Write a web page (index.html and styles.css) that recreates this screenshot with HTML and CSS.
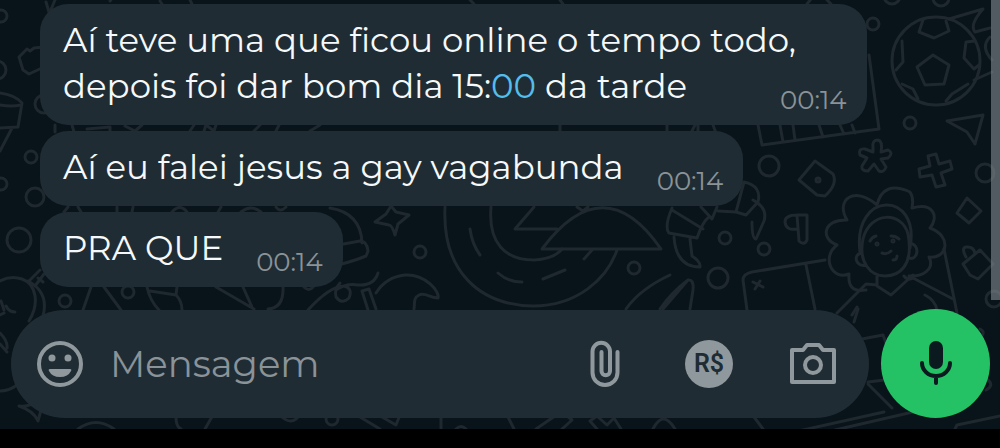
FILE: index.html
```html
<!DOCTYPE html>
<html lang="pt-BR">
<head>
    <meta charset="UTF-8">
    <meta name="viewport" content="width=device-width, initial-scale=1.0">
    <title>Conversa</title>
    <link rel="stylesheet" href="styles.css">
</head>
<body>
    <main class="chat">
        <!-- wallpaper -->
        <svg class="wallpaper" viewBox="0 0 1000 448" preserveAspectRatio="xMinYMin slice" aria-hidden="true">
            <!-- left edge -->
            <circle cx="1" cy="16" r="6"/>
            <circle cx="-3" cy="70" r="9"/>
            <circle cx="44" cy="104" r="9"/>
            <circle cx="31" cy="157" r="6"/>
            <circle cx="1" cy="184" r="6"/>
            <circle cx="35" cy="197" r="9"/>
            <circle cx="19" cy="240" r="12"/>
            <path d="M46 2l3 10M55 0l-5 12M44 47l-10 1-4 3-3-2-8 8 4 13 6 4 13-6"/>
            <path d="M0 93q15 2 22 10l-4 24-18 1M0 105q12 2 21 0M12 128L0 151"/>
            <path d="M0 281q11-6 22-2c14 5 18 24 7 42M28 281c15 8 19 20 15 35M30 280l10-10M35 286l9-12M38 278l5 4M1 301l3 9M6 306q3 6 9 6M0 315l4-2M0 333q8 8 7 15M0 344l7 8M0 391q9 0 17-6"/>
            <path d="M19 406q12 2 18-8l4 12-3 11q-4-10-19-15zM78 429q18-13 36 0"/>
            <!-- gaps between the bubbles -->
            <path d="M55 125v7M72 125l2 7M87 129l23-2v5M125 126l10 5 7-6M190 131l4-6M204 131l2-6 8 6 2-6M254 131l6-6M276 131l3-6M310 131l10-6M560 131v-6M667 125v6M692 131l3-6M698 131v-6M713 125l3 8"/>
            <path d="M64 212l4-5M78 207l3 5M117 212v-5M132 212l1-5M172 212q8-9 15 0M218 212l3-5M241 212q10-8 20 0M276 207q4 6 10 0"/>
            <path d="M110 1l3-4M160 1l2 3M190 0l2 4M470 0l4 4M560 0l3 4M807 4l4-5M827 0l4 4"/>
            <!-- plant and loops under the third bubble -->
            <circle cx="65" cy="301" r="6"/>
            <circle cx="128" cy="292" r="6"/>
            <path d="M91 287l-8 23M104 287l17 23M147 287q3 14 12 23M150 291l26 4 1-8M176 295q6 6 6 15M216 287l38 22M243 287l9 20M283 287q1 21-15 22M304 287q5 5 9 0"/>
            <path d="M308 310q22-24 36-24 9 2 5 12-7 7-13-1-2-8 4-14M336 290q10-7 22-5 16 1 20-12"/>
            <!-- hat, sparkle, hammer -->
            <circle cx="420" cy="252" r="6"/>
            <path d="M330 208q31 5 32 35M338 245l22-4q7 0 8 10l-2 5q-12 5-28 9"/>
            <path d="M391 206l5 6 13 3-11 9-3 11q-3-10-6-10l-14-3 11-8z"/>
            <path d="M376 309l-7-20-7 2 6 19M376 293q10-16 29-18c21-1 35 17 33 23-8 0-13-6-19-3-6 3-4 8-5 14"/>
            <!-- ring and melon slices -->
            <path d="M445 207c-3 64 34 98 88 99 44 0 74-27 84-56M491 207c-3 36 14 53 43 53q20-1 28-11M470 229q2 15 10 26M498 273q10 9 24 9M543 279l22-9M584 259l8-9"/>
            <path d="M557 229h-42l19-22M542 249h119c-38-55-78-55-119 0zM577 207l6 4 5-4"/>
            <circle cx="634" cy="268" r="6"/>
            <path d="M626 309q14-20 44-34M660 309q11-16 28-29 6-1 5 10l-3 19M663 309l25-29"/>
            <!-- crab -->
            <path d="M672 208q-8 19-3 25l28 5q6-17 12-21M672 210l31 19M701 207l11 12 5-12M718 211l18 1 8-30q18 4 14 20l-12 13-10-3M753 200q15 8 11 21l-8 18q-4 0-4-17M674 237q2 30 26 30 1-5-8-11l-2-17"/>
            <circle cx="725" cy="238" r="6"/>
            <circle cx="764" cy="249" r="6"/>
            <circle cx="718" cy="278" r="10"/>
            <circle cx="769" cy="166" r="10"/>
            <circle cx="873" cy="24" r="6"/>
            <circle cx="910" cy="123" r="6"/>
            <circle cx="985" cy="173" r="9"/>
            <circle cx="941" cy="-2" r="8"/>
            <circle cx="892" cy="-4" r="8"/>
            <circle cx="994" cy="299" r="8"/>
            <!-- football -->
            <circle cx="936" cy="61" r="44"/>
            <path d="M933 55l16 10-5 19-19 1-8-18zM923 20l-4 12 15 6 15-7-3-10M902 41l1 21-7 8M975 41l-9 1-2 16 10 11 5-4M902 84l11 5 5 10M946 101l6-7 16-10M949 19l34-10q-14 16-8 23l15-4M990 37q-10 10 2 23M974 80l18-8"/>
            <!-- piano -->
            <path d="M758 125l4 20 117-16-10-74M780 125l3 17M793 125l2 15M819 125l4 12M840 125l4 9M852 125l3 8"/>
            <!-- small shapes -->
            <path d="M947 121l36-6-8 29-8-12zM873 147q-1-7 5-7 5 1 3 12l7-2q6 3 0 8l-7 1 5 8q-2 6-7 4l-5-7-6 7q-7 0-6-5l5-8-7-3q-2-7 5-6l8 3zM928 156l8-2 3 10 11-3 2 8-11 4 4 12-9 2-4-12-12 2-1-8 11-3zM815 161l18 13q5 10-8 22l-8-1-18-15zM967 198l14 13-12 12-12-10z"/>
            <path d="M797 215h10v25q-3 6-8 1zM797 215q-12 0-12 7 1 9 12 7M966 257q-5-9 0-10 8-1 9 7M963 264l17-14 13 14-15 15-8-4z"/>
            <circle cx="818" cy="180" r="2"/>
            <!-- girl with curly hair -->
            <path d="M847 220c-12-20 7-35 30-15q6-25 33-13 4 6 2 16c22-6 27 9 18 20 22 8 18 31-1 29 6 12-6 20-20 19M847 220c-24-1-27 19-10 25-16 12-5 36 12 29-1 13 4 18 17 16"/>
            <path d="M860 252c-8-62 61-62 50-4M863 239c-5 24 8 37 22 37s29-10 23-42c-6-23-38-23-45 5zM862 253c-10 1-6 15 4 12M909 243c12 1 9 18 0 15M870 241q2-4 6-5M891 236q5 0 8 3M882 253q5 2 9-2M893 260q4 0 4-4M877 276v10l14 9 22-20M877 285l-11-1-29 29M904 276q4 5 9 2l40 21M925 295q10 5 12 15M857 307l-5 8"/>
            <circle cx="877" cy="244" r="1"/>
            <circle cx="893" cy="241" r="1"/>
            <path d="M747 310l-4-30q0-6 9-8l73-12M806 265l9 44M944 249l13 64M753 282l10 5M755 289l5-8"/>
            <!-- notebook behind the microphone -->
            <path d="M854 322l4-13M862 339l21-4 3 8M868 382l25-3M868 384l24 24M794 432l90-20M835 430l78-18M955 429l2-4 43-9M980 329q6 3 1 8M987 379q8 6-1 11"/>
            <!-- strip under the composer -->
            <path d="M176 417q0 10 5 12M205 429l8-14M282 417q9 8 16 0M360 417l20 12M382 417l14 8 4-10M441 429V417M508 417l6 12M536 429l19-13M562 429l10-9-6-5M590 421l7-5 10 9 7-7 7 11M590 421l7 8M754 417l9 12M653 429q10-20 22 0M456 429q5-5 10 0"/>
            <circle cx="332" cy="419" r="6"/>
        </svg>

        <ul class="messages">
            <li class="bubble">
                Aí teve uma que ficou online o tempo todo, depois foi dar bom dia 15:<a href="#">00</a> da tarde
                <time>00:14</time>
            </li>
            <li class="bubble">
                Aí eu falei jesus a gay vagabunda
                <time>00:14</time>
            </li>
            <li class="bubble">
                PRA QUE
                <time>00:14</time>
            </li>
        </ul>

        <form class="composer">
            <div class="field">
                <button type="button" class="icon" aria-label="Emoji">
                    <svg viewBox="0 0 48 48">
                        <circle cx="24" cy="24" r="21" fill="none" stroke="currentColor" stroke-width="4"/>
                        <circle cx="16" cy="18" r="3.500"/>
                        <circle cx="32" cy="18" r="3.500"/>
                        <path d="M14 29h20q2 0 1 2-3 6-11 6t-11-6q-1-2 1-2z"/>
                    </svg>
                </button>
                <input type="text" placeholder="Mensagem" aria-label="Mensagem">
                <button type="button" class="icon outline" aria-label="Anexar">
                    <svg viewBox="0 0 48 48">
                        <path d="M36.500 12v20.500a12.500 12.500 0 0 1-25 0V11.500a8.750 8.750 0 0 1 17.500 0V31a4.250 4.250 0 0 1-8.500 0V12"/>
                    </svg>
                </button>
                <button type="button" class="icon coin" aria-label="Pagamento">R$</button>
                <button type="button" class="icon outline" aria-label="Câmera">
                    <svg viewBox="0 0 48 48">
                        <path d="M3 10h11l4-5h12l4 5h11v32H3z"/>
                        <circle cx="24" cy="25" r="8"/>
                    </svg>
                </button>
            </div>
            <button type="button" class="mic" aria-label="Gravar áudio">
                <svg viewBox="0 0 48 48">
                    <rect x="17" y="1" width="14" height="28" rx="7"/>
                    <path d="M10 23a14 13 0 0 0 28 0M24 36v7" fill="none" stroke="currentColor" stroke-width="4" stroke-linecap="round"/>
                </svg>
            </button>
        </form>

        <div class="scrollbar"></div>
    </main>
</body>
</html>
```
FILE: styles.css
```css
* {
    box-sizing: border-box;
}

body {
    margin: 0;
    min-height: 100vh;
    display: flex;
    flex-direction: column;
    padding-bottom: 19px; /* system bar */
    background-color: #000;
    font-family: Montserrat, Inter, sans-serif;
    font-weight: 450;
    color: #f5f9fb;
}

.chat {
    position: relative;
    flex: 1;
    display: flex;
    flex-direction: column;
    justify-content: space-between;
    padding: 4px 10px 11px 11px;
    overflow: hidden;
    background-color: #08131a;
}

.wallpaper {
    position: absolute;
    top: 0;
    left: 0;
    width: 100%;
    fill: none;
    stroke: #1e282e;
    stroke-width: 3;
    stroke-linecap: round;
    stroke-linejoin: round;
}

.messages {
    position: relative;
    list-style: none;
    margin: 0;
    padding: 0 0 0 29px;
    display: flex;
    flex-direction: column;
    align-items: flex-start;
    gap: 6px;
}

.bubble {
    max-width: 87%;
    padding: 13px 20px 10px 23px;
    border-radius: 28px;
    background-color: #202c33;
    font-size: 34px;
    line-height: 46px;
}

.bubble a {
    color: #53bdeb;
    text-decoration: none;
}

.bubble time {
    float: right;
    margin-left: 33px;
    padding-top: 22px;
    font-size: 26px;
    line-height: 30px;
    color: #8a9398;
}

.composer {
    position: relative;
    display: flex;
    align-items: center;
    gap: 12px;
}

.field {
    flex: 1;
    min-width: 0;
    height: 108px;
    display: flex;
    align-items: center;
    padding: 0 32px 0 25px;
    border-radius: 54px;
    background-color: #202c33;
}

.field input {
    flex: 1;
    min-width: 0;
    margin-left: 26px;
    padding: 0;
    border: none;
    outline: none;
    background: none;
    font-family: inherit;
    font-size: 37px;
    font-weight: inherit;
    color: #f5f9fb;
}

.field input::placeholder {
    color: #8a9398;
    opacity: 1;
}

.icon {
    flex: none;
    width: 48px;
    height: 48px;
    padding: 0;
    border: none;
    background: none;
    color: #8f989d;
    cursor: pointer;
}

.icon svg,
.mic svg {
    display: block;
    width: 48px;
    height: 48px;
    fill: currentColor;
}

.icon.outline svg {
    fill: none;
    stroke: currentColor;
    stroke-width: 4;
    stroke-linecap: round;
    stroke-linejoin: round;
}

.icon + .icon {
    margin-left: 56px;
}

.icon.coin {
    border-radius: 50%;
    background-color: #8f989d;
    color: #202c33;
    font-family: Roboto, sans-serif;
    font-size: 25px;
    font-weight: 600;
}

.mic {
    flex: none;
    width: 109px;
    height: 109px;
    display: flex;
    justify-content: center;
    align-items: center;
    padding: 0;
    border: none;
    border-radius: 50%;
    background-color: #24c265;
    color: #0a1a1e;
    cursor: pointer;
}

.scrollbar {
    position: absolute;
    top: 0;
    right: 0;
    width: 9px;
    height: 70%;
    background-color: rgba(132, 140, 145, 0.6);
}
```
